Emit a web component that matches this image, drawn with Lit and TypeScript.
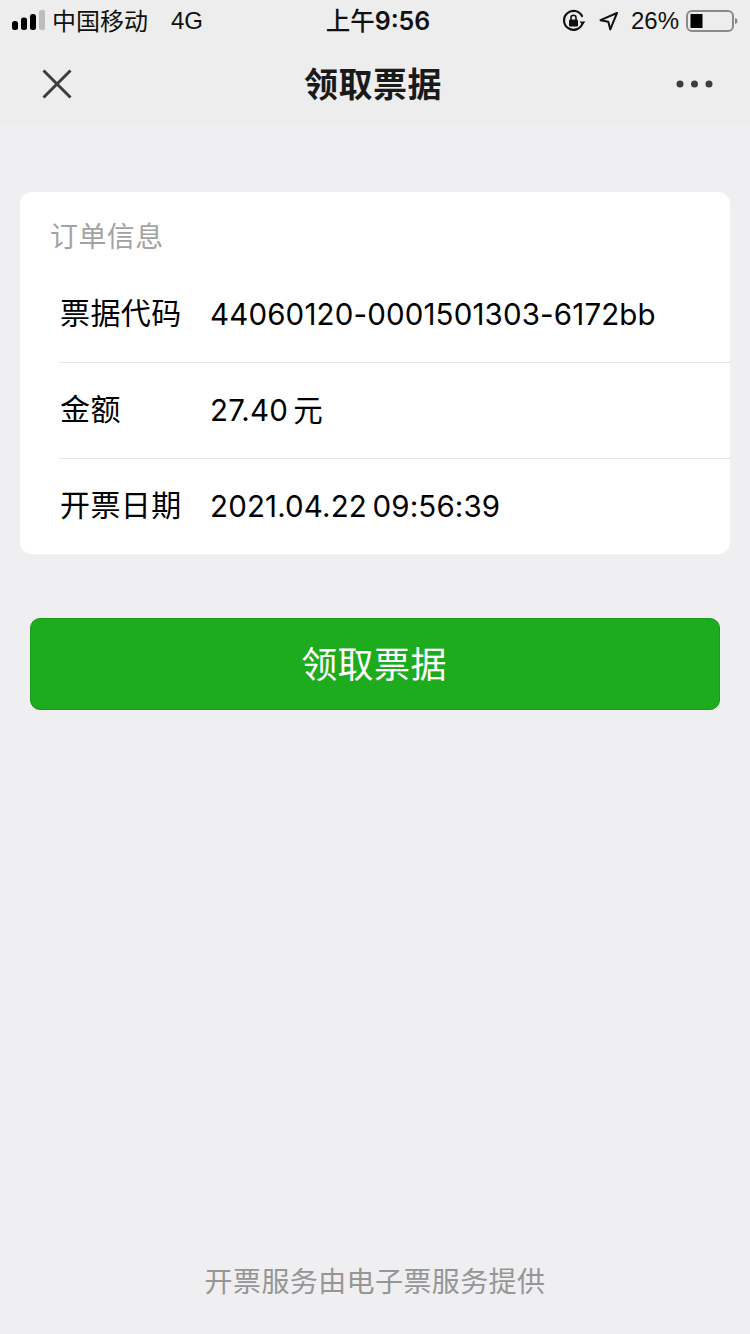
import { LitElement, html, css, svg } from "lit";
import { customElement } from "lit/decorators.js";

const rows = [
  { label: "票据代码", value: "44060120-0001501303-6172bb" },
  { label: "金额", value: "27.40 元" },
  { label: "开票日期", value: "2021.04.22 09:56:39" },
];

@customElement("app-root")
export class AppRoot extends LitElement {
  static styles = css`
    :host {
      display: flex;
      flex-direction: column;
      height: 1334px;
      background: #efeff1;
      font-family: "Liberation Sans", "Noto Sans CJK SC", sans-serif;
      color: #000;
      overflow: hidden;
    }

    .top {
      background: #ededed;
      height: 126px;
      flex-shrink: 0;
    }

    .status {
      height: 42px;
      display: grid;
      grid-template-columns: 1fr auto 1fr;
      align-items: center;
      padding: 0 12px;
      font-size: 24px;
      color: #111;
    }

    .status-left,
    .status-right {
      display: flex;
      align-items: center;
    }

    .status-right {
      justify-content: flex-end;
    }

    .carrier {
      margin-left: 6px;
      padding-bottom: 4px;
    }

    .network {
      margin-left: 23px;
    }

    .clock {
      font-family: Inter, "Noto Sans CJK SC", sans-serif;
      font-weight: 500;
      font-size: 24.5px;
      margin-left: 6px;
      padding-bottom: 3px;
    }

    .clock b {
      font-weight: 600;
      font-size: 25px;
    }

    .pct {
      margin: 0 7px 0 12px;
    }

    .gap {
      width: 13px;
    }

    .nav {
      height: 84px;
      display: flex;
      align-items: center;
      justify-content: space-between;
      padding: 0 36px 0 42px;
      position: relative;
    }

    .nav-title {
      position: absolute;
      left: 0;
      right: 4px;
      text-align: center;
      font-size: 34px;
      font-weight: 600;
      color: #1a1a1a;
      margin-top: -4px;
      letter-spacing: 0.5px;
    }

    .card {
      margin: 66px 20px 0;
      background: #fff;
      border-radius: 12px;
      padding-top: 28px;
      height: 362px;
      box-sizing: border-box;
    }

    .card-title {
      font-size: 28px;
      line-height: 36px;
      letter-spacing: 0.4px;
      color: #a3a3a3;
      padding-left: 30px;
    }

    .rows {
      margin-top: 11px;
    }

    .row {
      display: flex;
      align-items: center;
      height: 96px;
      box-sizing: border-box;
      margin-left: 39px;
      font-size: 30px;
      line-height: 40px;
      border-bottom: 1px solid #e5e5e5;
    }

    .row:last-child {
      border-bottom: none;
    }

    .label {
      width: 150px;
      margin-left: 1px;
      padding-bottom: 2px;
      letter-spacing: 0.4px;
      flex-shrink: 0;
    }

    .value {
      font-family: Inter, "Noto Sans CJK SC", sans-serif;
      font-size: 29.5px;
      letter-spacing: 0.15px;
      word-spacing: -3px;
      padding-bottom: 2px;
    }

    .action {
      margin: 64px 30px 0;
      height: 92px;
      background: #1dac1d;
      border: 1px solid #199a19;
      box-sizing: border-box;
      border-radius: 10px;
      display: flex;
      align-items: center;
      justify-content: center;
      color: #fff;
      font-size: 36px;
      letter-spacing: 0.4px;
      padding: 0 2px 4px 0;
    }

    .foot {
      margin-top: auto;
      padding-bottom: 30px;
      text-align: center;
      font-size: 28px;
      letter-spacing: 0.4px;
      line-height: 42px;
      color: #969696;
    }
  `;

  private signal() {
    return html`<svg width="34" height="22" viewBox="0 1 34 22">
      <rect x="0" y="12" width="6" height="9" rx="2.5" fill="#000"></rect>
      <rect x="9" y="8.5" width="6" height="12.5" rx="2.5" fill="#000"></rect>
      <rect x="18" y="5" width="6" height="16" rx="2.5" fill="#000"></rect>
      <rect x="27" y="1" width="6" height="20" rx="2" fill="#bdbdbd"></rect>
    </svg>`;
  }

  private rotationLock() {
    return html`<svg width="24" height="24" viewBox="0 0 24 24" fill="none">
      ${svg`<path d="M20.5 14.5A9.5 9.5 0 1 1 20 7" stroke="#111" stroke-width="2.2" stroke-linecap="round"></path>
      <path d="M17.5 12.5h6l-3 3.6z" fill="#111"></path>
      <rect x="7" y="10.5" width="9" height="7" rx="1.2" fill="#111"></rect>
      <path d="M9 11V8.8a2.5 2.5 0 0 1 5 0V11" stroke="#111" stroke-width="1.6"></path>`}
    </svg>`;
  }

  private location() {
    return html`<svg width="20" height="20" viewBox="0 0 20 20" fill="none">
      <path d="M18 2 1.500 9.200l7.800 1.600 2 7.600z" stroke="#111" stroke-width="2" stroke-linejoin="round"></path>
    </svg>`;
  }

  private battery() {
    return html`<svg width="52" height="24" viewBox="0 0 52 24" fill="none">
      <rect x="1" y="2" width="46" height="20" rx="5" stroke="#8a8a8a" stroke-width="2"></rect>
      <rect x="4.500" y="5" width="12" height="14" fill="#000"></rect>
      <path d="M49 9c1.800.4 2.500 1.500 2.500 3s-.7 2.600-2.500 3z" fill="#8a8a8a"></path>
    </svg>`;
  }

  private close() {
    return html`<svg width="30" height="30" viewBox="0 0 30 30" fill="none">
      <path d="M1.500 1.500 28.500 28.500M28.500 1.500 1.500 28.500" stroke="#3d3d3d" stroke-width="3"></path>
    </svg>`;
  }

  private more() {
    return html`<svg width="38" height="10" viewBox="0 0 38 10">
      <circle cx="4" cy="5" r="3.500" fill="#3d3d3d"></circle>
      <circle cx="18.500" cy="5" r="3.500" fill="#3d3d3d"></circle>
      <circle cx="33" cy="5" r="3.500" fill="#3d3d3d"></circle>
    </svg>`;
  }

  render() {
    return html`
      <div class="top">
        <div class="status">
          <div class="status-left">
            ${this.signal()}
            <span class="carrier">中国移动</span>
            <span class="network">4G</span>
          </div>
          <div class="clock">上午<b>9:56</b></div>
          <div class="status-right">
            ${this.rotationLock()}
            <span class="gap"></span>
            ${this.location()}
            <span class="pct">26%</span>
            ${this.battery()}
          </div>
        </div>
        <div class="nav">
          ${this.close()}
          <div class="nav-title">领取票据</div>
          ${this.more()}
        </div>
      </div>
      <div class="card">
        <div class="card-title">订单信息</div>
        <div class="rows">
          ${rows.map(
            (r) => html`<div class="row">
              <span class="label">${r.label}</span>
              <span class="value">${r.value}</span>
            </div>`
          )}
        </div>
      </div>
      <div class="action">领取票据</div>
      <div class="foot">开票服务由电子票服务提供</div>
    `;
  }
}
